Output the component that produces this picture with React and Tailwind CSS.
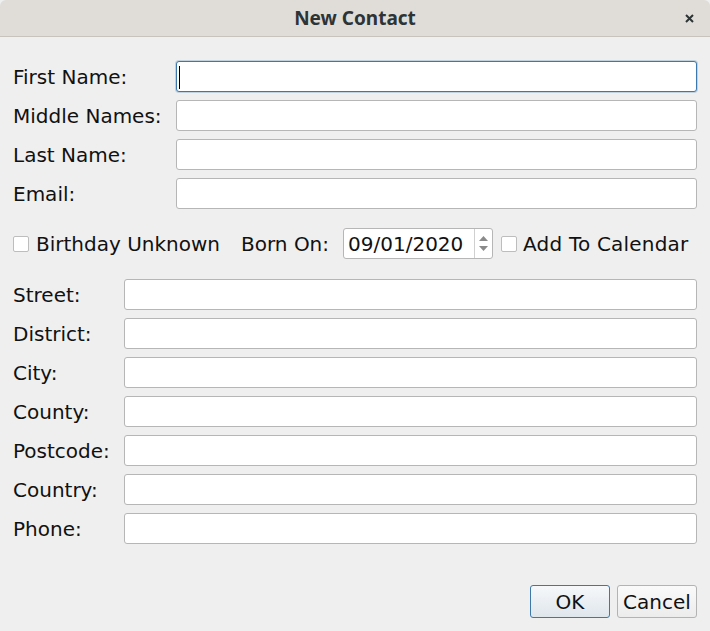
import React from 'react';

const topFields = ['First Name:', 'Middle Names:', 'Last Name:', 'Email:'];
const addressFields = ['Street:', 'District:', 'City:', 'County:', 'Postcode:', 'Country:', 'Phone:'];

const Field = ({ focused }) => (
    <div
        className={
            'relative h-[31px] rounded-[3px] border bg-white ' +
            (focused ? 'border-[#3a78ad] shadow-[0_0_0_1px_rgba(58,120,173,0.25)]' : 'border-[#b6b6b6]')
        }
    >
        {focused && <div className="absolute left-[2px] top-[4px] h-[23px] w-px bg-black" />}
    </div>
);

const Check = () => <div className="h-[16px] w-[16px] shrink-0 rounded-[2px] border border-[#bdbdbd] bg-white" />;

const App = () => {
    return (
        <div
            className="flex h-[631px] w-[710px] flex-col bg-[#efefef] text-[20px] text-[#111]"
            style={{ fontFamily: '"DejaVu Sans", sans-serif' }}
        >
            {/* Title bar */}
            <div className="relative flex h-[37px] shrink-0 items-center justify-center rounded-t-[6px] border-b border-[#c8c3bc] bg-[#e0ddd9]">
                <span
                    className="text-[19px] font-bold text-[#2e3436]"
                    style={{ fontFamily: '"Noto Sans", sans-serif' }}
                >
                    New Contact
                </span>
                <svg className="absolute right-[16px] top-[14px]" width="9" height="9" viewBox="0 0 9 9">
                    <path d="M1 1 L8 8 M8 1 L1 8" stroke="#2e3436" strokeWidth="2" />
                </svg>
            </div>

            <div className="flex grow flex-col px-[13px] pt-[24px] pb-[13px]">
                {/* Name fields */}
                <div className="grid grid-cols-[163px_1fr] gap-y-[8px]">
                    {topFields.map((label, i) => (
                        <React.Fragment key={label}>
                            <div className="flex h-[31px] items-center leading-none">{label}</div>
                            <Field focused={i === 0} />
                        </React.Fragment>
                    ))}
                </div>

                {/* Birthday row */}
                <div className="mt-[19px] flex h-[31px] items-center leading-none">
                    <Check />
                    <span className="ml-[7px]">Birthday Unknown</span>
                    <span className="ml-[21px]">Born On:</span>
                    <div className="ml-[14px] flex h-[31px] w-[150px] rounded-[3px] border border-[#b6b6b6] bg-white">
                        <div className="flex grow items-center pl-[4px]">09/01/2020</div>
                        <div className="flex w-[18px] flex-col items-center justify-center gap-[5px] border-l border-[#d0d0d0]">
                            <svg width="9" height="5" viewBox="0 0 9 5">
                                <path d="M0 5 L4.5 0 L9 5 Z" fill="#8a8a8a" />
                            </svg>
                            <svg width="9" height="5" viewBox="0 0 9 5">
                                <path d="M0 0 L4.5 5 L9 0 Z" fill="#8a8a8a" />
                            </svg>
                        </div>
                    </div>
                    <div className="ml-[8px]">
                        <Check />
                    </div>
                    <span className="ml-[6px] tracking-[0.2px]">Add To Calendar</span>
                </div>

                {/* Address fields */}
                <div className="mt-[20px] grid grid-cols-[111px_1fr] gap-y-[8px]">
                    {addressFields.map((label) => (
                        <React.Fragment key={label}>
                            <div className="flex h-[31px] items-center leading-none">{label}</div>
                            <Field />
                        </React.Fragment>
                    ))}
                </div>

                <div className="grow" />

                {/* Buttons */}
                <div className="flex justify-end gap-[7px]">
                    <button className="h-[33px] w-[80px] rounded-[3px] border border-[#3d78a9] bg-gradient-to-b from-[#f6f8fa] to-[#dfe6ec] leading-none text-[#111]">
                        OK
                    </button>
                    <button className="h-[33px] w-[80px] rounded-[3px] border border-[#b3b3b3] bg-gradient-to-b from-[#fafafa] to-[#ececec] leading-none text-[#111]">
                        Cancel
                    </button>
                </div>
            </div>
        </div>
    );
};

export default App;
